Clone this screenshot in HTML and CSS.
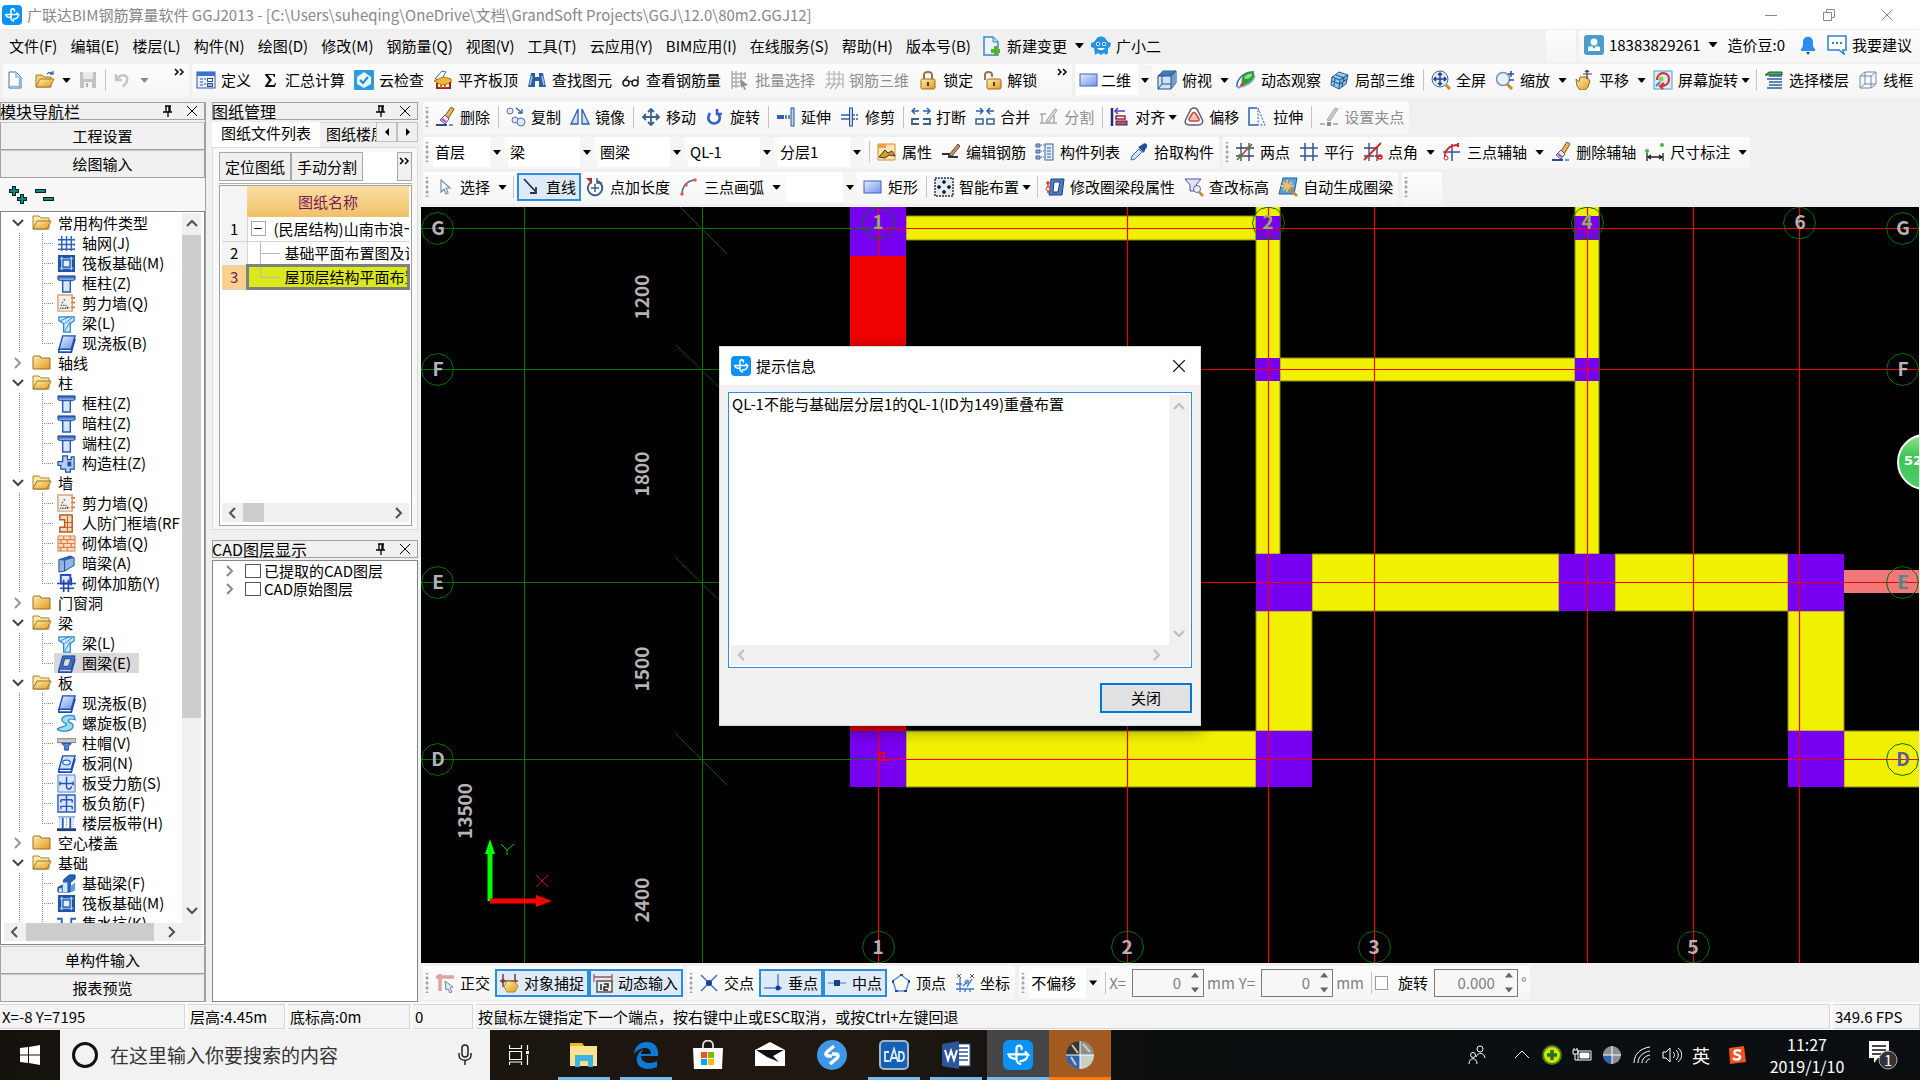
FILE: index.html
```html
<!DOCTYPE html>
<html lang="zh-CN">
<head>
<meta charset="utf-8">
<title>广联达BIM钢筋算量软件 GGJ2013</title>
<link rel="stylesheet" href="styles.css">
</head>
<body>
<svg class="sprite" width="0" height="0" aria-hidden="true">
<defs>
<linearGradient id="gBlue" x1="0" y1="0" x2="1" y2="1"><stop offset="0" stop-color="#e4edff"/><stop offset="1" stop-color="#6f93e8"/></linearGradient>
<linearGradient id="gGold" x1="0" y1="0" x2="1" y2="1"><stop offset="0" stop-color="#fff0b0"/><stop offset="1" stop-color="#e0981c"/></linearGradient>
<linearGradient id="gSteel" x1="0" y1="0" x2="0" y2="1"><stop offset="0" stop-color="#1d4fae"/><stop offset="1" stop-color="#a9c8f4"/></linearGradient>
</defs>
<symbol id="logo" viewBox="0 0 20 20"><rect width="20" height="20" rx="4" fill="#0a93f5"/><path d="M12.500 6c0-3-3.500-3-3.500 0v7M3.500 9.500h13l-1.500-1.500M16.500 9.500c0 3-2.500 4.500-5 4.500M4 9.500c0 2 1.500 3 5 3M9 13c0 1.500 1 2.500 2.500 3" fill="none" stroke="#fff" stroke-width="1.500" stroke-linecap="round"/></symbol>
<symbol id="new" viewBox="0 0 20 20"><path d="M2 2h7l5 5v11H2z" fill="#fff" stroke="#3f6ea8"/><path d="M9 2v5h5M12.500 8v8.500H3" fill="none" stroke="#8fb3dd" stroke-width="1.500"/></symbol>
<symbol id="open" viewBox="0 0 20 20"><path d="M1 17V5h6l2 2h7v10z" fill="#f5d27a" stroke="#a5782b"/><path d="M1 17l4-8h14l-4 8z" fill="url(#gGold)" stroke="#a5782b"/><path d="M12 4c2-2 4-2 6 0M18 1v3h-3" fill="none" stroke="#3c6aa0" stroke-width="1.300"/></symbol>
<symbol id="save" viewBox="0 0 20 20"><path d="M2 2h16v16H2z" fill="#c2c2c2"/><path d="M5 2h10v7H5z" fill="#e9e9e9"/><path d="M6 12h8v6H6z" fill="#f4f4f4"/><path d="M8 13h2v4H8z" fill="#b0b0b0"/></symbol>
<symbol id="undo" viewBox="0 0 20 20"><path d="M3 4v6h6M4 9c4-6 12-4 10 2-1 3-3 4-4 6" fill="none" stroke="#c6c6c6" stroke-width="2.500"/></symbol>
<symbol id="define" viewBox="0 0 20 20"><rect x="1" y="2" width="18" height="16" fill="#e9f1ff" stroke="#2f5aa8"/><path d="M1 2h18v4H1z" fill="#3d71cf"/><path d="M4 9h3M4 12h3M4 15h3M8 9h2M8 14h2" stroke="#33508c"/><rect x="11.500" y="8.500" width="5" height="3" fill="#fff" stroke="#33508c"/><rect x="11.500" y="13.500" width="5" height="3" fill="#9bb9ee" stroke="#33508c"/></symbol>
<symbol id="sigma" viewBox="0 0 20 20"><path d="M5 4h10v3h-1l-1-2H8l4 5-4 5h6l1-2h1l-1 4H5v-1l4-6-4-5z" fill="#111"/></symbol>
<symbol id="check" viewBox="0 0 20 20"><rect width="20" height="20" rx="1" fill="#2d9be0"/><path d="M10 2l7 5v7l-7 4-7-4V7z" fill="#e8f6ff"/><path d="M6 10l3 3 5-6" fill="none" stroke="#2089d0" stroke-width="2"/></symbol>
<symbol id="slabtop" viewBox="0 0 20 20"><path d="M2 9l7-8 4 1-5 8z" fill="#fff" stroke="#3a68b0"/><path d="M1 11l9-4 8 2v4l-9 2z" fill="#f0b73a" stroke="#b07414"/><path d="M4 13v5h13v-6" fill="none" stroke="#a3231d" stroke-width="2"/><path d="M8 15v3M12 14v4" stroke="#c06a20" stroke-width="2"/></symbol>
<symbol id="binoc" viewBox="0 0 20 20"><path d="M4 3h4v4h4V3h4l3 14h-7v-6H8v6H1z" fill="#2c5ea8"/><path d="M5 6l-2 9M15 6l2 9" stroke="#a9c6ec" stroke-width="1.500"/></symbol>
<symbol id="glasses" viewBox="0 0 20 20"><circle cx="5" cy="13" r="3" fill="none" stroke="#222" stroke-width="1.500"/><circle cx="14" cy="13" r="3" fill="none" stroke="#222" stroke-width="1.500"/><path d="M8 12c1-1 2-1 3 0M2 12l5-6M17 12V6" fill="none" stroke="#222" stroke-width="1.300"/></symbol>
<symbol id="batch" viewBox="0 0 20 20"><path d="M2 1v18M2 4h14M2 8h14M2 12h8M2 16h8M6 1v17M11 2v9M15 2v7" fill="none" stroke="#b0b0b0" stroke-width="1.500"/><path d="M10 9l8 6-4 1 2 3-2 1-1-4-2 2z" fill="#8d8d8d"/></symbol>
<symbol id="rebar3d" viewBox="0 0 20 20"><path d="M5 1v14M10 1v14M15 1v14M19 4v14M2 4h17M2 9h17M2 14h17M1 18L6 13M6 19l5-6M11 19l5-6" fill="none" stroke="#b2b2b2" stroke-width="1.200"/></symbol>
<symbol id="lock" viewBox="0 0 20 20"><path d="M6 10V5c0-4 8-4 8 0v5" fill="none" stroke="#8a7a58" stroke-width="2"/><rect x="3" y="9" width="14" height="10" rx="1.500" fill="url(#gGold)" stroke="#9c6c16"/><path d="M10 12v4" stroke="#5c3d08" stroke-width="2"/></symbol>
<symbol id="unlock" viewBox="0 0 20 20"><path d="M3 10V5c0-4 7-4 7 0v2" fill="none" stroke="#8a7a58" stroke-width="2"/><rect x="5" y="9" width="14" height="10" rx="1.500" fill="url(#gGold)" stroke="#9c6c16"/><path d="M12 12v4" stroke="#5c3d08" stroke-width="2"/></symbol>
<symbol id="rect" viewBox="0 0 20 20"><rect x="1" y="4" width="17" height="12" fill="url(#gBlue)" stroke="#3c66c8"/></symbol>
<symbol id="cube" viewBox="0 0 20 20"><path d="M1 6l5-5h13v12l-5 6H1z" fill="#cfe2f5" stroke="#234f86"/><path d="M1 6l5-5h13l-5 5z" fill="#3f79b8"/><path d="M14 6v13l5-6V1z" fill="#6fa0cf"/><path d="M1 6h13v13M14 6l5-5M5 6v8h9M1 19l4-5" fill="none" stroke="#234f86"/></symbol>
<symbol id="orbit" viewBox="0 0 20 20"><path d="M1 17C0 10 8 1 18 2" fill="none" stroke="#2c62b4" stroke-width="1.500"/><path d="M6 13C4 5 12 0 18 3c2 6-3 12-9 12z" fill="#2f9e35"/><path d="M8 8c1-3 5-5 8-4 0 3-3 5-6 5z" fill="#8be07c"/><path d="M2 19l4-7 3 3z" fill="#d33a2a"/><path d="M1 17c6 1 15-4 18-11" fill="none" stroke="#7fa6d8" stroke-width="1.500"/></symbol>
<symbol id="local3d" viewBox="0 0 20 20"><path d="M2 7l7-5 9 3-2 9-7 5-8-4z" fill="#9fc9ea" stroke="#1f5f99"/><path d="M2 7l8 3 8-5M10 10l-1 9M6 5l8 3-2 9M5 8l-1 8M2 11l8 3 7-5" fill="none" stroke="#1f5f99" stroke-width="1.200"/></symbol>
<symbol id="fit" viewBox="0 0 20 20"><circle cx="9" cy="9" r="8" fill="#e1ecfb" stroke="#45679f"/><path d="M9 3v12M3 9h12M7 5l2-2 2 2M7 13l2 2 2-2M5 7L3 9l2 2M13 7l2 2-2 2" fill="none" stroke="#1d3f8a" stroke-width="1.500"/><path d="M15 15l4 4" stroke="#c98a2a" stroke-width="3"/></symbol>
<symbol id="zoom" viewBox="0 0 20 20"><circle cx="8" cy="9" r="6.500" fill="#e8f1fb" stroke="#7f93ac" stroke-width="1.500"/><path d="M12 14l5 5" stroke="#c08a32" stroke-width="3"/><path d="M16 1v6M13 4h6M14 10h5" stroke="#2a4f9a" stroke-width="1.500"/></symbol>
<symbol id="pan" viewBox="0 0 20 20"><path d="M2 9l3 3 1-5h7l3 4-2 6-3 3H6l-3-4z" fill="url(#gGold)" stroke="#8e6a1f"/><path d="M13 0v9M9 4h9M11 2l2-2 2 2" fill="none" stroke="#444" stroke-width="1.200"/></symbol>
<symbol id="rotscr" viewBox="0 0 20 20"><rect x="1" y="1" width="18" height="18" fill="#d8eefb" stroke="#4aa0d8"/><path d="M4 10C4 1 16 1 16 9c0 5-4 7-8 7M11 13l-4 3 3 3" fill="none" stroke="#d33" stroke-width="2.200"/><circle cx="8" cy="9" r="2.500" fill="#8bcf5c"/><path d="M3 16l4-4" stroke="#3f7fc0" stroke-width="2"/></symbol>
<symbol id="floors" viewBox="0 0 20 20"><path d="M1 5l4-3h13v3z" fill="#4fae4d" stroke="#1d5a2a"/><path d="M5 6h13M3 9h15M5 12h13M5 15h13M3 18h15" stroke="#2c5f9e" stroke-width="1.600"/></symbol>
<symbol id="wire" viewBox="0 0 20 20"><path d="M2 6l5-4h11v12l-5 4H2zM2 6h11v12M13 6l5-4M7 2v12h11M2 18l5-4" fill="none" stroke="#7089b0"/></symbol>
<symbol id="erase" viewBox="0 0 20 20"><path d="M10 9l6-9 3 2-6 10z" fill="#f0b552" stroke="#805820"/><path d="M5 13l5-5 4 4-4 5z" fill="#e6e9f8" stroke="#5a4a8a"/><path d="M7 12l4 3" stroke="#c04890" stroke-width="2"/><path d="M1 17h11v2H1z" fill="#2a4e8c"/><path d="M14 17h4v2h-4z" fill="#7894c4"/></symbol>
<symbol id="copy" viewBox="0 0 20 20"><circle cx="4" cy="4" r="3" fill="#dfe9f7" stroke="#52719e"/><circle cx="9" cy="13" r="3" fill="#dfe9f7" stroke="#52719e"/><circle cx="15" cy="15" r="4" fill="#dfe9f7" stroke="#52719e"/><path d="M10 1l6 5M16 2v4h-4" fill="none" stroke="#2f5fae" stroke-width="1.300"/></symbol>
<symbol id="mirror" viewBox="0 0 20 20"><path d="M8 2v15H1zM12 2v15h7z" fill="#cfe0f8" stroke="#2f5fae" stroke-width="1.300"/></symbol>
<symbol id="move" viewBox="0 0 20 20"><path d="M10 2v16M2 10h16M7 5l3-3 3 3M7 15l3 3 3-3M5 7l-3 3 3 3M15 7l3 3-3 3" fill="none" stroke="#3c618c" stroke-width="1.800"/></symbol>
<symbol id="rotate" viewBox="0 0 20 20"><path d="M5 6c-5 8 3 13 8 9 3-3 2-7-1-9M12 2v5h5" fill="none" stroke="#2f62c8" stroke-width="2.600"/></symbol>
<symbol id="extend" viewBox="0 0 20 20"><path d="M1 8h7v4H1z" fill="#2f62b0"/><path d="M10 8v4M13 8v4" stroke="#2f62b0" stroke-width="1.500"/><rect x="15" y="1" width="3" height="18" fill="#bcd4f4" stroke="#2f5590"/></symbol>
<symbol id="trim" viewBox="0 0 20 20"><path d="M1 8h8M1 12h8M13 8h2M16 8h2M13 12h2M16 12h2" stroke="#2f62b0" stroke-width="1.500"/><rect x="9.500" y="1" width="3" height="18" fill="#bcd4f4" stroke="#2f5590"/></symbol>
<symbol id="break" viewBox="0 0 20 20"><path d="M1 4h7M4 1L1 4l3 3M12 4h7M16 1l3 3-3 3" fill="none" stroke="#2f62b0" stroke-width="1.500"/><path d="M8 12H1v5h7M12 12h7v5h-7" fill="none" stroke="#3c618c" stroke-width="1.800"/></symbol>
<symbol id="merge" viewBox="0 0 20 20"><path d="M1 4h7M5 1l3 3-3 3M12 4h7M15 1l-3 3 3 3" fill="none" stroke="#2f62b0" stroke-width="1.500"/><path d="M1 12h7v5H1zM12 12h7v5h-7z" fill="none" stroke="#3c618c" stroke-width="1.500"/></symbol>
<symbol id="split" viewBox="0 0 20 20"><path d="M1 7h6M1 16h17M3 7v9M15 8v8" fill="none" stroke="#a8a8a8" stroke-width="1.500"/><path d="M7 14L16 2l2 1-8 12z" fill="#ddd" stroke="#a0a0a0"/></symbol>
<symbol id="align" viewBox="0 0 20 20"><path d="M2 1v18" stroke="#1c2f7a" stroke-width="2.500"/><path d="M5 4h10M8 1L5 4l3 3" fill="none" stroke="#4a48c8" stroke-width="1.500"/><rect x="6" y="9" width="9" height="3" fill="#fff" stroke="#a3202c" stroke-width="1.500"/><rect x="6" y="14" width="11" height="4" fill="#d94550" stroke="#1c2f7a"/></symbol>
<symbol id="offset" viewBox="0 0 20 20"><path d="M6 4c1-4 7-4 8 0l4 8c2 4-1 6-4 6H6c-4 0-6-2-4-6z" fill="#fff" stroke="#52617e" stroke-width="1.500"/><path d="M8 7c1-2 3-2 4 0l3 5c0 2 0 2-2 2H7c-2 0-2-1-2-2z" fill="#f7c0b8" stroke="#d04438" stroke-width="1.500"/></symbol>
<symbol id="stretch" viewBox="0 0 20 20"><path d="M9 1H1v17h9" fill="none" stroke="#2f62b0" stroke-width="1.500"/><path d="M10 1l7 17H10z" fill="#eef4fd" stroke="#2f62b0" stroke-dasharray="2 1.500"/></symbol>
<symbol id="grip-pt" viewBox="0 0 20 20"><path d="M8 13l8-12 3 1-8 12z" fill="#ccc" stroke="#a6a6a6"/><path d="M1 17h5M14 17h5" stroke="#a0a0a0" stroke-width="1.500"/><path d="M8 15h4v4H8z" fill="#8c8c8c"/></symbol>
<symbol id="props" viewBox="0 0 20 20"><path d="M1 2h17v16H1z" fill="#fbe5b6" stroke="#d88c30"/><path d="M1 2h8v4H1z" fill="#e9a344"/><path d="M2 15l6-7 3 3 4-2 3 5-6-1-4 3z" fill="#d8a018" stroke="#333"/></symbol>
<symbol id="editbar" viewBox="0 0 20 20"><path d="M1 12h7v3h9" fill="none" stroke="#333" stroke-width="1.800"/><path d="M8 13L17 2l2 2-8 10z" fill="#c49a74" stroke="#6b3c28"/></symbol>
<symbol id="list" viewBox="0 0 20 20"><path d="M1 2h4v3H1zM1 8h4v3H1zM1 14h4v3H1z" fill="#8fb0de" stroke="#44618c"/><path d="M6 3h3M6 9h3M6 15h3" stroke="#44618c" stroke-dasharray="1 1"/><rect x="10" y="2" width="8" height="16" fill="#dfe9f8" stroke="#3b62a0"/><path d="M12 6h4M12 9h4M12 12h4M12 15h4" stroke="#3b62a0"/></symbol>
<symbol id="picker" viewBox="0 0 20 20"><path d="M2 18l1-4 7-7 3 3-7 7z" fill="#cfe2f8" stroke="#3b6db0"/><path d="M9 5l6 6 1-3 2-3c1-3-2-5-4-3l-3 2z" fill="#254f96"/></symbol>
<symbol id="twopt" viewBox="0 0 20 20"><path d="M6 1v18M14 1v18M1 6h18M1 14h18" stroke="#33466e" stroke-width="1.300"/><path d="M2 18L17 2" stroke="#d22" stroke-width="1.500"/><circle cx="14" cy="6" r="2" fill="#2b9a33"/><circle cx="5" cy="14" r="2" fill="#2b9a33"/></symbol>
<symbol id="parallel" viewBox="0 0 20 20"><path d="M6 1v18M14 1v18M1 6h18M1 14h18" stroke="#34539c" stroke-width="1.500"/></symbol>
<symbol id="ptangle" viewBox="0 0 20 20"><path d="M6 1v18M14 5v14M1 6h14M1 14h10" stroke="#33466e" stroke-width="1.300"/><path d="M1 18L18 1M12 14h6" stroke="#d22" stroke-width="1.800"/><circle cx="17" cy="15" r="2" fill="none" stroke="#d22" stroke-width="1.500"/></symbol>
<symbol id="threeaxis" viewBox="0 0 20 20"><path d="M1 10h17M10 2v17" stroke="#34539c" stroke-width="1.500"/><path d="M3 16C2 8 8 3 16 3" fill="none" stroke="#d22" stroke-width="1.800"/><circle cx="4" cy="16" r="2" fill="#fff" stroke="#d22"/><path d="M16 1v4" stroke="#d22" stroke-width="2"/></symbol>
<symbol id="dim" viewBox="0 0 20 20"><path d="M2 11v8M18 11v8M3 15h14M6 13l-3 2 3 2M14 13l3 2-3 2" fill="none" stroke="#222" stroke-width="1.300"/><circle cx="2" cy="9" r="2" fill="#49b04a"/><circle cx="17" cy="3" r="2" fill="#49b04a"/></symbol>
<symbol id="cursor" viewBox="0 0 20 20"><path d="M6 3v12l3-3 2 5 2-1-2-5h4z" fill="#fff" stroke="#7a8db0" stroke-width="1.200"/></symbol>
<symbol id="line" viewBox="0 0 20 20"><path d="M3 2l12 13M15 10v6h-6" fill="none" stroke="#22345f" stroke-width="1.800"/></symbol>
<symbol id="ptlen" viewBox="0 0 20 20"><path d="M6 5c-8 7 1 17 8 12 5-4 4-11-2-13" fill="none" stroke="#3e5c86" stroke-width="2"/><path d="M10 7v8M6 11h8M12 1v5h5" fill="none" stroke="#3e5c86" stroke-width="1.500"/><path d="M1 1h6v6z" fill="#b3312c"/></symbol>
<symbol id="arc" viewBox="0 0 20 20"><path d="M3 18C3 9 8 4 16 3" fill="none" stroke="#3e6db4" stroke-width="1.500"/><circle cx="3" cy="17" r="1.800" fill="#e06050"/><circle cx="7" cy="8" r="1.800" fill="#e06050"/><circle cx="16" cy="3" r="1.800" fill="#e06050"/></symbol>
<symbol id="smart" viewBox="0 0 20 20"><rect x="1" y="1" width="18" height="18" fill="#dfeaf8" stroke="#333" stroke-width="1.500" stroke-dasharray="2 1"/><path d="M10 3v4M10 13v4M3 10h4M13 10h4M8 5h4M8 15h4M5 8v4M15 8v4" stroke="#111" stroke-width="1.500"/></symbol>
<symbol id="segprop" viewBox="0 0 20 20"><path d="M6 2h13l-2 16H4z" fill="#4d7fc6" stroke="#1f3f7c"/><path d="M9 5h6l-2 10H8z" fill="#fff" stroke="#1f3f7c"/><path d="M1 6h5M3 4v12" stroke="#d2452c" stroke-width="1.500"/><circle cx="3" cy="12" r="2" fill="#fff" stroke="#d2452c"/></symbol>
<symbol id="elev" viewBox="0 0 20 20"><path d="M1 2h16l-5 6v6H6V8z" fill="#dce3fa" stroke="#4a57a8"/><circle cx="13" cy="12" r="3.500" fill="#e7f2fb" stroke="#667"/><path d="M15 15l4 4" stroke="#c08a32" stroke-width="2.500"/></symbol>
<symbol id="autogen" viewBox="0 0 20 20"><path d="M5 1h14l-3 16H1z" fill="#5ba0df" stroke="#1f5f99"/><path d="M9 3v12M3 9h13M5 5l9 9M14 5l-9 8" stroke="#f2c05c" stroke-width="1.800"/><path d="M12 12l7 7" stroke="#c08a32" stroke-width="2.500"/></symbol>
<symbol id="ortho" viewBox="0 0 20 20"><path d="M1 4h18M5 1v17" stroke="#dfa3a3" stroke-width="3.500"/><path d="M10 8l8 6-3 1 2 4-2 1-2-4-2 1z" fill="#dfe6ee" stroke="#7386a0"/></symbol>
<symbol id="snap" viewBox="0 0 20 20"><path d="M1 8h18M4 1v13M16 1v13" stroke="#7c3b3b" stroke-width="1.500"/><circle cx="4" cy="8" r="2" fill="#7c3b3b"/><path d="M5 14l3-6 8 1 3 4-3 6H8z" fill="url(#gGold)" stroke="#b08a30"/></symbol>
<symbol id="dyn" viewBox="0 0 20 20"><path d="M1 4h18M1 1v8M19 1v8" stroke="#9c5a5a" stroke-width="1.300"/><rect x="4" y="8" width="15" height="11" fill="#eee" stroke="#555" stroke-width="1.500"/><path d="M8 11v6M11 11h4v3h-4v3h4" fill="none" stroke="#222" stroke-width="1.500"/></symbol>
<symbol id="cross" viewBox="0 0 20 20"><path d="M2 2l16 16M18 2L2 18" stroke="#3a76c8" stroke-width="1.500"/><circle cx="10" cy="10" r="3" fill="#173f8f"/></symbol>
<symbol id="perp" viewBox="0 0 20 20"><path d="M1 15h18M15 1v14" stroke="#4a86d8" stroke-width="1.500"/><circle cx="15" cy="15" r="2.500" fill="#173f8f"/></symbol>
<symbol id="mid" viewBox="0 0 20 20"><path d="M1 10h18" stroke="#6ba0e4" stroke-width="1.500"/><path d="M7 7h6v6H7z" fill="#173f8f"/></symbol>
<symbol id="vertex" viewBox="0 0 20 20"><path d="M10 2l8 6-3 10H5L2 8z" fill="none" stroke="#5d8fd8" stroke-width="1.500"/><path d="M9 1h3v2H9zM1 7h2v3H1zM17 7h2v3h-2zM4 17h3v2H4zM13 17h3v2h-3z" fill="#214e9a"/></symbol>
<symbol id="coord" viewBox="0 0 20 20"><path d="M1 16h18M5 5v14M1 11h6M8 13l5-5M12 14l5-8M10 16v3M15 16v3" fill="none" stroke="#3a76c8" stroke-width="1.300"/><path d="M2 1l4 4M6 1L2 5M15 1l4 4M19 1l-4 4" stroke="#555"/><circle cx="12" cy="9" r="2" fill="none" stroke="#3a76c8"/></symbol>
<symbol id="newchange" viewBox="0 0 20 20"><path d="M2 1h9l5 5v13H2z" fill="#eaf5ff" stroke="#3a87c6" stroke-width="1.500"/><path d="M11 1v5h5" fill="#bcdcf4" stroke="#3a87c6"/><path d="M12 10h3v3h3v4h-3v3h-3v-3H9v-4h3z" fill="#52b52c"/></symbol>
<symbol id="robot" viewBox="0 0 20 20"><path d="M0 7l3-1 3-4c2-2 6-2 8 0l3 4 3 1-1 4-2 1v5l-2 2-2-2-3 2-3-2-3 2-1-7-3-1z" fill="#2296e4"/><circle cx="7" cy="8" r="2" fill="#fff"/><circle cx="13" cy="8" r="2" fill="#fff"/><circle cx="7" cy="8" r="1" fill="#125"/><circle cx="13" cy="8" r="1" fill="#125"/><path d="M6 12c2 3 6 3 8 0z" fill="#fff"/></symbol>
<symbol id="user" viewBox="0 0 20 20"><rect width="20" height="20" rx="3" fill="#4b9cc9"/><circle cx="10" cy="7" r="3.500" fill="#fff"/><path d="M4 16v-4l4-1 2 3 2-3 4 1v4z" fill="#fff"/></symbol>
<symbol id="bell" viewBox="0 0 20 20"><path d="M3 14c2-2 2-3 2-7 0-7 10-7 10 0 0 4 0 5 2 7v2H3z" fill="#2b8df0"/><path d="M8 17h4l-2 3z" fill="#1c4f88"/></symbol>
<symbol id="bubble" viewBox="0 0 20 20"><path d="M1 1h18v14h-3l1 4-5-4H1z" fill="#fff" stroke="#2b7fd8" stroke-width="1.500"/><path d="M5 8h2M9 8h2M13 8h2" stroke="#2b7fd8" stroke-width="2"/></symbol>
<symbol id="pin" viewBox="0 0 12 12"><path d="M3 1h6M4 1v6M8 1v6M7 1v6M1 7h9M6 7v5" fill="none" stroke="#000" stroke-width="1.300"/></symbol>
<symbol id="x" viewBox="0 0 12 12"><path d="M1 1l10 10M11 1L1 11" stroke="currentColor" fill="none"/></symbol>
<symbol id="down" viewBox="0 0 12 12"><path d="M1 3l5 5 5-5" fill="none" stroke="currentColor" stroke-width="2"/></symbol>
<symbol id="up" viewBox="0 0 12 12"><path d="M1 9l5-5 5 5" fill="none" stroke="currentColor" stroke-width="2"/></symbol>
<symbol id="right" viewBox="0 0 12 12"><path d="M3 1l5 5-5 5" fill="none" stroke="currentColor" stroke-width="2"/></symbol>
<symbol id="left" viewBox="0 0 12 12"><path d="M9 1L4 6l5 5" fill="none" stroke="currentColor" stroke-width="2"/></symbol>
<symbol id="more" viewBox="0 0 12 12"><path d="M2 2l3 3-3 3M7 2l3 3-3 3" fill="none" stroke="#000" stroke-width="1.500"/></symbol>
<symbol id="fopen" viewBox="0 0 20 20"><path d="M1 16V3h6l2 2h8v11z" fill="#fbe7a0" stroke="#a5843b"/><path d="M1 16l4-8h14l-4 8z" fill="url(#gGold)" stroke="#9a7020"/></symbol>
<symbol id="fclosed" viewBox="0 0 20 20"><path d="M1 16V4l1-1h6l1 2h9v11z" fill="url(#gGold)" stroke="#9a7020"/></symbol>
<symbol id="t-grid" viewBox="0 0 20 20"><path d="M5 2v16M10 2v16M15 2v16M1 6h16M1 11h16M1 16h16" stroke="#2a62c4" stroke-width="1.500"/><path d="M17 5h2v2h-2zM17 10h2v2h-2zM17 15h2v2h-2z" fill="#2a62c4"/></symbol>
<symbol id="t-raft" viewBox="0 0 20 20"><path d="M1 1h18v18H1z" fill="#1f55a4"/><path d="M3 5h14M3 15h14M5 3v14M15 3v14" stroke="#b9d4f6" stroke-width="1.300"/><path d="M7 7h6v6H7z" fill="#e6f0fc"/></symbol>
<symbol id="t-col" viewBox="0 0 20 20"><path d="M1 2h18v4l-3 1H4L1 6z" fill="url(#gSteel)" stroke="#17469e"/><path d="M6 7h8v12H6z" fill="#d5e5fb" stroke="#2a5cb4" stroke-width="1.500"/></symbol>
<symbol id="t-shear" viewBox="0 0 20 20"><path d="M1 1h15v17H1z" fill="#f4f2f0" stroke="#d9a37f" stroke-width="1.500"/><path d="M3 15h10M4 12h6M5 9h2M10 14h3M7 6h2" stroke="#555" stroke-width="1.500" stroke-dasharray="1.500 1"/><path d="M15 4h4M15 9h4M15 14h4" stroke="#e2781f" stroke-width="1.800"/></symbol>
<symbol id="t-beam" viewBox="0 0 20 20"><path d="M2 3h16v4l-4 3v9H7V10L2 7z" fill="#cbe8fb" stroke="#2585cf" stroke-width="1.300"/><path d="M4 7l9-4M8 10l8-6M8 18l6-10" stroke="#2585cf"/></symbol>
<symbol id="t-slab" viewBox="0 0 20 20"><path d="M6 2h13l-4 14H2z" fill="url(#gBlue)" stroke="#1c4fae" stroke-width="1.500"/><path d="M2 16v3h13l4-14" fill="none" stroke="#1c4fae" stroke-width="1.800"/></symbol>
<symbol id="t-struct" viewBox="0 0 20 20"><path d="M6 2h5v4h4V3h3v13h-4v3H9v-3H4v-4H1V8h5z" fill="#b3cff5" stroke="#2150a4" stroke-width="1.300"/><path d="M11 8h4v5h-4z" fill="#1f4ca0"/></symbol>
<symbol id="t-civil" viewBox="0 0 20 20"><path d="M3 1h13v18H3v-5h5V6H3z" fill="#f7d8b8" stroke="#b35a20" stroke-width="1.500"/><path d="M11 2v16M8 9h8M8 14h8" stroke="#b35a20"/></symbol>
<symbol id="t-brick" viewBox="0 0 20 20"><path d="M1 2h18v16H1z" fill="#f8dcc4" stroke="#d98347"/><path d="M1 6h18M1 10h18M1 14h18M7 2v4M14 2v4M4 6v4M11 6v4M7 10v4M15 10v4M4 14v4M11 14v4" stroke="#d98347" stroke-width="1.300"/></symbol>
<symbol id="t-hidden" viewBox="0 0 20 20"><path d="M2 6l12-4 4 2v8L8 18l-6 1z" fill="#8eb6e8" stroke="#20497f"/><path d="M2 6l6 1 10-3-4-2z" fill="#2f5f9e"/><path d="M8 7v11" stroke="#20497f"/></symbol>
<symbol id="t-rebar" viewBox="0 0 20 20"><path d="M4 1h10v9H4z" fill="#dce8ff" stroke="#1f4fd0" stroke-width="2"/><path d="M0 10h20M3 15h15M7 6v13M12 6v13M15 4v8" stroke="#2547a8" stroke-width="1.800"/></symbol>
<symbol id="t-ring" viewBox="0 0 20 20"><path d="M6 2h13l-4 14H2z" fill="#3f72c8" stroke="#1c3f8e"/><path d="M8 5h7l-3 8H6z" fill="#dcdcdc" stroke="#1c3f8e"/><path d="M2 16v3h13l4-14" fill="none" stroke="#1c4fae" stroke-width="1.800"/></symbol>
<symbol id="t-spiral" viewBox="0 0 20 20"><path d="M18 2C8 0 3 4 6 8c2 2 6 2 3 4-2 2-6 1-9 4 6 4 17 2 17-4 0-3-6-3-5-5 1-2 4-2 7-1z" fill="#9fdcf8" stroke="#2888c8" stroke-width="1.300"/></symbol>
<symbol id="t-cap" viewBox="0 0 20 20"><path d="M0 5h20v4H0z" fill="#ccc" stroke="#777"/><path d="M5 10h10l-3 3v4H8v-4z" fill="#4c86e0" stroke="#1c4fae"/></symbol>
<symbol id="t-hole" viewBox="0 0 20 20"><path d="M6 2h13l-4 14H2z" fill="#cfe0fa" stroke="#1c4fae" stroke-width="1.500"/><ellipse cx="10" cy="9" rx="4" ry="2.500" fill="#fff" stroke="#1c6fde" stroke-width="1.300"/><path d="M2 16v3h13l4-14" fill="none" stroke="#1c4fae" stroke-width="1.800"/></symbol>
<symbol id="t-main" viewBox="0 0 20 20"><path d="M1 1h18v18H1z" fill="#d9e6fb" stroke="#4a7bd0"/><path d="M3 10h14M3 8v4M17 8v4M10 3v10c0 4 5 4 5 0" fill="none" stroke="#2457b8" stroke-width="1.500"/></symbol>
<symbol id="t-neg" viewBox="0 0 20 20"><path d="M1 1h18v18H1z" fill="#d9e6fb" stroke="#2a5cc4" stroke-width="1.500"/><path d="M10 1v18M4 6h12M4 13h12M4 6v3M16 6v3M4 13v3M16 13v3" stroke="#2457b8" stroke-width="1.500"/></symbol>
<symbol id="t-band" viewBox="0 0 20 20"><path d="M1 3h18" stroke="#7ea4de" stroke-width="1.500"/><path d="M6 4v11M14 4v11" stroke="#2457b8" stroke-width="2"/><path d="M3 4v10M10 4v10M17 4v10" stroke="#7ea4de" stroke-dasharray="2 1"/><path d="M0 15h20v3H0z" fill="#1c3f7e"/></symbol>
<symbol id="t-fbeam" viewBox="0 0 20 20"><path d="M7 6l6-5h6v4l-5 4v10H1v-5l6-3z" fill="#1f66b4" stroke="#123f78"/><path d="M6 9h5v10H6zM2 15h3v4H2z" fill="#cfe4fa"/><path d="M14 13l5-4v8l-3 2h-2z" fill="#5f9bd8"/></symbol>
<symbol id="t-pit" viewBox="0 0 20 20"><path d="M0 5h5v10h10V5h5" fill="none" stroke="#2a62c4" stroke-width="2"/></symbol>
</svg>

<header class="titlebar">
  <svg class="ico"><use href="#logo"/></svg>
  <h1>广联达BIM钢筋算量软件 GGJ2013 - [C:\Users\suheqing\OneDrive\文档\GrandSoft Projects\GGJ\12.0\80m2.GGJ12]</h1>
  <div class="window-buttons">
    <button aria-label="最小化"><svg viewBox="0 0 12 12"><path d="M0 6.500h12" stroke="#888"/></svg></button>
    <button aria-label="还原"><svg viewBox="0 0 12 12"><path d="M.5 3.500h8v8h-8zM3.500 3V.500h8v8H9" fill="none" stroke="#888"/></svg></button>
    <button aria-label="关闭窗口"><svg viewBox="0 0 12 12"><path d="M.5.500l11 11M11.500.500l-11 11" stroke="#888"/></svg></button>
  </div>
</header>

<nav class="menubar">
  <button class="menu">文件(F)</button><button class="menu">编辑(E)</button><button class="menu">楼层(L)</button><button class="menu">构件(N)</button><button class="menu">绘图(D)</button><button class="menu">修改(M)</button><button class="menu">钢筋量(Q)</button><button class="menu">视图(V)</button><button class="menu">工具(T)</button><button class="menu">云应用(Y)</button><button class="menu">BIM应用(I)</button><button class="menu">在线服务(S)</button><button class="menu">帮助(H)</button><button class="menu">版本号(B)</button>
  <button class="tool drop"><svg class="ico"><use href="#newchange"/></svg>新建变更</button>
  <button class="tool"><svg class="ico"><use href="#robot"/></svg>广小二</button>
  <div class="bar spare"></div>
  <div class="bar account">
    <button class="tool drop"><svg class="ico"><use href="#user"/></svg>18383829261</button>
    <span class="beans">造价豆:0</span>
    <button class="tool" aria-label="通知"><svg class="ico"><use href="#bell"/></svg></button>
    <button class="tool"><svg class="ico"><use href="#bubble"/></svg>我要建议</button>
  </div>
</nav>

<div class="toolrow main-tools">
  <div class="bar files">
    <button class="tool icon-only" aria-label="新建"><svg class="ico"><use href="#new"/></svg></button>
    <button class="tool icon-only drop" aria-label="打开"><svg class="ico"><use href="#open"/></svg></button>
    <button class="tool icon-only" aria-label="保存"><svg class="ico"><use href="#save"/></svg></button>
    <i class="sep"></i>
    <button class="tool icon-only drop off" aria-label="撤销"><svg class="ico"><use href="#undo"/></svg></button>
    <button class="more" aria-label="更多"><svg><use href="#more"/></svg></button>
  </div>
  <div class="bar calc">
    <button class="tool"><svg class="ico"><use href="#define"/></svg>定义</button>
    <button class="tool"><svg class="ico"><use href="#sigma"/></svg>汇总计算</button>
    <button class="tool"><svg class="ico"><use href="#check"/></svg>云检查</button>
    <button class="tool"><svg class="ico"><use href="#slabtop"/></svg>平齐板顶</button>
    <button class="tool"><svg class="ico"><use href="#binoc"/></svg>查找图元</button>
    <button class="tool"><svg class="ico"><use href="#glasses"/></svg>查看钢筋量</button>
    <button class="tool off"><svg class="ico"><use href="#batch"/></svg>批量选择</button>
    <button class="tool off"><svg class="ico"><use href="#rebar3d"/></svg>钢筋三维</button>
    <button class="tool"><svg class="ico"><use href="#lock"/></svg>锁定</button>
    <button class="tool"><svg class="ico"><use href="#unlock"/></svg>解锁</button>
    <button class="more" aria-label="更多"><svg><use href="#more"/></svg></button>
  </div>
  <div class="bar view">
    <label class="combo with-icon"><svg class="ico"><use href="#rect"/></svg><select aria-label="视图模式"><option>二维</option></select></label>
    <button class="tool drop"><svg class="ico"><use href="#cube"/></svg>俯视</button>
    <button class="tool"><svg class="ico"><use href="#orbit"/></svg>动态观察</button>
    <button class="tool"><svg class="ico"><use href="#local3d"/></svg>局部三维</button>
    <i class="sep"></i>
    <button class="tool"><svg class="ico"><use href="#fit"/></svg>全屏</button>
    <button class="tool drop"><svg class="ico"><use href="#zoom"/></svg>缩放</button>
    <button class="tool drop"><svg class="ico"><use href="#pan"/></svg>平移</button>
    <button class="tool drop tight"><svg class="ico"><use href="#rotscr"/></svg>屏幕旋转</button>
    <i class="sep"></i>
    <button class="tool"><svg class="ico"><use href="#floors"/></svg>选择楼层</button>
    <button class="tool"><svg class="ico"><use href="#wire"/></svg>线框</button>
  </div>
</div>

<main>
  <aside class="nav">
    <header class="panel-head"><h2>模块导航栏</h2><button aria-label="固定"><svg><use href="#pin"/></svg></button><button aria-label="关闭"><svg><use href="#x"/></svg></button></header>
    <button class="section">工程设置</button>
    <button class="section">绘图输入</button>
    <div class="tree-tools">
      <button aria-label="全部展开"><svg viewBox="0 0 20 20"><path d="M6 1v10M1 6h10M14 9v10M9 14h10" stroke="#022" stroke-width="4"/><path d="M6 2v8M2 6h8M14 10v8M10 14h8" stroke="#0a8a80" stroke-width="2"/></svg></button>
      <button aria-label="全部折叠"><svg viewBox="0 0 20 20"><path d="M0 6h11M8 14h11" stroke="#022" stroke-width="4"/><path d="M1 6h9M9 14h9" stroke="#0a8a80" stroke-width="2"/></svg></button>
    </div>
    <div class="tree-box">
      <ul class="tree">
        <li><div class="folder"><svg class="chev"><use href="#down"/></svg><svg class="ico"><use href="#fopen"/></svg>常用构件类型</div>
          <ul><li><svg class="ico"><use href="#t-grid"/></svg>轴网(J)</li><li><svg class="ico"><use href="#t-raft"/></svg>筏板基础(M)</li><li><svg class="ico"><use href="#t-col"/></svg>框柱(Z)</li><li><svg class="ico"><use href="#t-shear"/></svg>剪力墙(Q)</li><li><svg class="ico"><use href="#t-beam"/></svg>梁(L)</li><li><svg class="ico"><use href="#t-slab"/></svg>现浇板(B)</li></ul></li>
        <li><div class="folder closed"><svg class="chev"><use href="#right"/></svg><svg class="ico"><use href="#fclosed"/></svg>轴线</div></li>
        <li><div class="folder"><svg class="chev"><use href="#down"/></svg><svg class="ico"><use href="#fopen"/></svg>柱</div>
          <ul><li><svg class="ico"><use href="#t-col"/></svg>框柱(Z)</li><li><svg class="ico"><use href="#t-col"/></svg>暗柱(Z)</li><li><svg class="ico"><use href="#t-col"/></svg>端柱(Z)</li><li><svg class="ico"><use href="#t-struct"/></svg>构造柱(Z)</li></ul></li>
        <li><div class="folder"><svg class="chev"><use href="#down"/></svg><svg class="ico"><use href="#fopen"/></svg>墙</div>
          <ul><li><svg class="ico"><use href="#t-shear"/></svg>剪力墙(Q)</li><li><svg class="ico"><use href="#t-civil"/></svg>人防门框墙(RF</li><li><svg class="ico"><use href="#t-brick"/></svg>砌体墙(Q)</li><li><svg class="ico"><use href="#t-hidden"/></svg>暗梁(A)</li><li><svg class="ico"><use href="#t-rebar"/></svg>砌体加筋(Y)</li></ul></li>
        <li><div class="folder closed"><svg class="chev"><use href="#right"/></svg><svg class="ico"><use href="#fclosed"/></svg>门窗洞</div></li>
        <li><div class="folder"><svg class="chev"><use href="#down"/></svg><svg class="ico"><use href="#fopen"/></svg>梁</div>
          <ul><li><svg class="ico"><use href="#t-beam"/></svg>梁(L)</li><li class="current"><span><svg class="ico"><use href="#t-ring"/></svg>圈梁(E)</span></li></ul></li>
        <li><div class="folder"><svg class="chev"><use href="#down"/></svg><svg class="ico"><use href="#fopen"/></svg>板</div>
          <ul><li><svg class="ico"><use href="#t-slab"/></svg>现浇板(B)</li><li><svg class="ico"><use href="#t-spiral"/></svg>螺旋板(B)</li><li><svg class="ico"><use href="#t-cap"/></svg>柱帽(V)</li><li><svg class="ico"><use href="#t-hole"/></svg>板洞(N)</li><li><svg class="ico"><use href="#t-main"/></svg>板受力筋(S)</li><li><svg class="ico"><use href="#t-neg"/></svg>板负筋(F)</li><li><svg class="ico"><use href="#t-band"/></svg>楼层板带(H)</li></ul></li>
        <li><div class="folder closed"><svg class="chev"><use href="#right"/></svg><svg class="ico"><use href="#fclosed"/></svg>空心楼盖</div></li>
        <li><div class="folder"><svg class="chev"><use href="#down"/></svg><svg class="ico"><use href="#fopen"/></svg>基础</div>
          <ul><li><svg class="ico"><use href="#t-fbeam"/></svg>基础梁(F)</li><li><svg class="ico"><use href="#t-raft"/></svg>筏板基础(M)</li><li><svg class="ico"><use href="#t-pit"/></svg>集水坑(K)</li></ul></li>
      </ul>
      <div class="vscroll"><svg><use href="#up"/></svg><i class="thumb"></i><svg><use href="#down"/></svg></div>
      <div class="hscroll"><svg><use href="#left"/></svg><i class="thumb"></i><svg><use href="#right"/></svg></div>
    </div>
    <button class="section">单构件输入</button>
    <button class="section">报表预览</button>
  </aside>

  <aside class="drawings">
    <header class="panel-head"><h2>图纸管理</h2><button aria-label="固定"><svg><use href="#pin"/></svg></button><button aria-label="关闭"><svg><use href="#x"/></svg></button></header>
    <div class="tabs">
      <button class="tab selected">图纸文件列表</button><button class="tab">图纸楼层</button>
      <button class="arrow" aria-label="向左"><svg viewBox="0 0 12 12"><path d="M8 2v8L4 6z"/></svg></button><button class="arrow" aria-label="向右"><svg viewBox="0 0 12 12"><path d="M4 2v8l4-4z"/></svg></button>
    </div>
    <div class="sheet">
      <div class="sheet-tools"><button>定位图纸</button><button>手动分割</button><button class="overflow" aria-label="更多"><svg><use href="#more"/></svg></button></div>
      <div class="sheet-grid">
        <table>
          <thead><tr><th class="idx"></th><th>图纸名称</th></tr></thead>
          <tbody>
            <tr><td class="idx">1</td><td><div class="cell"><i class="box">−</i>(民居结构)山南市浪卡子</div></td></tr>
            <tr><td class="idx">2</td><td><div class="cell sub">基础平面布置图及说明</div></td></tr>
            <tr class="picked"><td class="idx">3</td><td><div class="cell sub last">屋顶层结构平面布置图</div></td></tr>
          </tbody>
        </table>
        <div class="hscroll"><svg><use href="#left"/></svg><i class="thumb"></i><svg><use href="#right"/></svg></div>
      </div>
    </div>
    <header class="panel-head layers-head"><h2>CAD图层显示</h2><button aria-label="固定"><svg><use href="#pin"/></svg></button><button aria-label="关闭"><svg><use href="#x"/></svg></button></header>
    <div class="layers">
      <div class="layer"><svg class="chev"><use href="#right"/></svg><label><input type="checkbox">已提取的CAD图层</label></div>
      <div class="layer"><svg class="chev"><use href="#right"/></svg><label><input type="checkbox">CAD原始图层</label></div>
    </div>
  </aside>

  <section class="work">
    <div class="toolrow"><div class="bar"><i class="grip"></i>
      <button class="tool"><svg class="ico"><use href="#erase"/></svg>删除</button><i class="sep"></i>
      <button class="tool"><svg class="ico"><use href="#copy"/></svg>复制</button>
      <button class="tool"><svg class="ico"><use href="#mirror"/></svg>镜像</button><i class="sep"></i>
      <button class="tool"><svg class="ico"><use href="#move"/></svg>移动</button>
      <button class="tool"><svg class="ico"><use href="#rotate"/></svg>旋转</button><i class="sep"></i>
      <button class="tool"><svg class="ico"><use href="#extend"/></svg>延伸</button>
      <button class="tool"><svg class="ico"><use href="#trim"/></svg>修剪</button><i class="sep"></i>
      <button class="tool"><svg class="ico"><use href="#break"/></svg>打断</button>
      <button class="tool"><svg class="ico"><use href="#merge"/></svg>合并</button>
      <button class="tool off"><svg class="ico"><use href="#split"/></svg>分割</button><i class="sep"></i>
      <button class="tool drop tight"><svg class="ico"><use href="#align"/></svg>对齐</button>
      <button class="tool"><svg class="ico"><use href="#offset"/></svg>偏移</button>
      <button class="tool"><svg class="ico"><use href="#stretch"/></svg>拉伸</button><i class="sep"></i>
      <button class="tool off"><svg class="ico"><use href="#grip-pt"/></svg>设置夹点</button>
    </div></div>
    <div class="toolrow"><div class="bar"><i class="grip"></i>
      <span class="combo short"><select aria-label="楼层"><option>首层</option></select></span>
      <span class="combo"><select aria-label="构件大类"><option>梁</option></select></span>
      <span class="combo"><select aria-label="构件类型"><option>圈梁</option></select></span>
      <span class="combo"><select aria-label="构件"><option>QL-1</option></select></span>
      <span class="combo"><select aria-label="分层"><option>分层1</option></select></span><i class="sep"></i>
      <button class="tool"><svg class="ico"><use href="#props"/></svg>属性</button>
      <button class="tool"><svg class="ico"><use href="#editbar"/></svg>编辑钢筋</button>
      <button class="tool"><svg class="ico"><use href="#list"/></svg>构件列表</button>
      <button class="tool"><svg class="ico"><use href="#picker"/></svg>拾取构件</button>
    </div><div class="bar"><i class="grip"></i>
      <button class="tool"><svg class="ico"><use href="#twopt"/></svg>两点</button>
      <button class="tool"><svg class="ico"><use href="#parallel"/></svg>平行</button>
      <button class="tool drop"><svg class="ico"><use href="#ptangle"/></svg>点角</button>
      <button class="tool drop"><svg class="ico"><use href="#threeaxis"/></svg>三点辅轴</button>
      <button class="tool"><svg class="ico"><use href="#erase"/></svg>删除辅轴</button>
      <button class="tool drop"><svg class="ico"><use href="#dim"/></svg>尺寸标注</button>
    </div></div>
    <div class="toolrow"><div class="bar"><i class="grip"></i>
      <button class="tool drop"><svg class="ico"><use href="#cursor"/></svg>选择</button><i class="sep"></i>
      <button class="tool on"><svg class="ico"><use href="#line"/></svg>直线</button>
      <button class="tool"><svg class="ico"><use href="#ptlen"/></svg>点加长度</button>
      <button class="tool drop"><svg class="ico"><use href="#arc"/></svg>三点画弧</button>
      <span class="combo short"><select aria-label="画法"><option></option></select></span>
      <button class="tool"><svg class="ico"><use href="#rect"/></svg>矩形</button><i class="sep"></i>
      <button class="tool drop tight"><svg class="ico"><use href="#smart"/></svg>智能布置</button><i class="sep"></i>
      <button class="tool"><svg class="ico"><use href="#segprop"/></svg>修改圈梁段属性</button>
      <button class="tool"><svg class="ico"><use href="#elev"/></svg>查改标高</button>
      <button class="tool"><svg class="ico"><use href="#autogen"/></svg>自动生成圈梁</button>
    </div><div class="bar empty"><i class="grip"></i></div></div>

    <div class="canvas">
      <svg viewBox="421 207 1499 756" preserveAspectRatio="xMinYMin slice" role="img" aria-label="圈梁平面图">
        <g fill="#f0f000" stroke="#8a8a20" stroke-width="1">
          <rect x="906" y="216" width="350" height="24"/><rect x="1256" y="200" width="24" height="354"/><rect x="1575" y="200" width="24" height="354"/>
          <rect x="1280" y="358" width="295" height="23"/><rect x="1312" y="554" width="247" height="57"/><rect x="1615" y="554" width="173" height="57"/>
          <rect x="1256" y="611" width="56" height="120"/><rect x="1788" y="611" width="56" height="120"/><rect x="906" y="731" width="350" height="56"/><rect x="1844" y="731" width="80" height="56"/>
        </g>
        <rect x="850" y="256" width="56" height="475" fill="#f00000"/>
        <rect x="1844" y="570" width="80" height="23" fill="#f07878"/>
        <g fill="#7800f0">
          <rect x="850" y="200" width="56" height="56"/><rect x="850" y="731" width="56" height="56"/>
          <rect x="1256" y="216" width="24" height="24"/><rect x="1575" y="216" width="24" height="24"/><rect x="1256" y="358" width="24" height="23"/><rect x="1575" y="358" width="24" height="23"/>
          <rect x="1256" y="554" width="56" height="57"/><rect x="1559" y="554" width="56" height="57"/><rect x="1788" y="554" width="56" height="57"/>
          <rect x="1256" y="731" width="56" height="56"/><rect x="1788" y="731" width="56" height="56"/>
        </g>
        <g stroke="#007800" fill="none">
          <path d="M421 228.500H878M421 369.500H878M421 582.500H878M421 759.500H878M524.500 207V963M702.500 207V963"/>
          <path d="M680 207L727 254M676 345L727 395M676 558L727 608M676 734L727 785" stroke="#005a00"/>
        </g>
        <path d="M878 228.500H1920M878 369.500H1920M878 582.500H1920M878 759.500H1920M878.500 207V963M1127.500 207V963M1268.500 207V963M1374.500 207V963M1587.500 207V963M1693.500 207V963M1799.500 207V963" stroke="#f00000" stroke-width="1.200" fill="none"/>
        <path d="M879 750v10h11M880 753h4v6" stroke="#f00000" stroke-width="2" fill="none"/>
        <defs><path id="ring" d="M0-16L8-14 14-8 16 0 14 8 8 14 0 16-8 14-14 8-16 0-14-8-8-14z"/></defs>
        <g stroke="#007000" fill="none">
          <use href="#ring" x="437.500" y="228.500"/><use href="#ring" x="437.500" y="369.500"/><use href="#ring" x="437.500" y="582.500"/><use href="#ring" x="437.500" y="759.500"/>
          <use href="#ring" x="1902.500" y="228.500"/><use href="#ring" x="1902.500" y="369.500"/><use href="#ring" x="1902.500" y="582.500"/><use href="#ring" x="1902.500" y="759.500"/>
          <use href="#ring" x="878.500" y="223"/><use href="#ring" x="1268.500" y="223"/><use href="#ring" x="1587.500" y="223"/><use href="#ring" x="1799.500" y="223"/>
          <use href="#ring" x="878.500" y="947"/><use href="#ring" x="1127.500" y="947"/><use href="#ring" x="1374.500" y="947"/><use href="#ring" x="1693.500" y="947"/>
        </g>
        <g class="axis-text">
          <text x="438" y="235">G</text><text x="438" y="376">F</text><text x="438" y="589">E</text><text x="438" y="766">D</text>
          <text x="1903" y="235">G</text><text x="1903" y="376">F</text><text x="1903" y="589" fill="#4a8a8a">E</text><text x="1903" y="766" fill="#6058a0">D</text>
          <text x="878" y="229" fill="#8fb060">1</text><text x="1268" y="229" fill="#8fb060">2</text><text x="1587" y="229" fill="#8fb060">4</text><text x="1800" y="229">6</text>
          <text x="878" y="954">1</text><text x="1127" y="954">2</text><text x="1374" y="954">3</text><text x="1693" y="954">5</text>
          <text transform="translate(649 297) rotate(-90)">1200</text><text transform="translate(649 474) rotate(-90)">1800</text><text transform="translate(649 669) rotate(-90)">1500</text><text transform="translate(649 900) rotate(-90)">2400</text><text transform="translate(472 811) rotate(-90)">13500</text>
        </g>
        <path d="M490 901V850" stroke="#00ff00" stroke-width="5"/><path d="M485 854L490 839L495 854z" fill="#00ff00"/>
        <path d="M490 901H540" stroke="#ff0000" stroke-width="5"/><path d="M536 895L552 901L536 907z" fill="#ff0000"/>
        <path d="M501 844l6 6 7-6M507 850v5" stroke="#00d000" fill="none"/><path d="M536 875l12 12M548 875l-12 12" stroke="#d00000" fill="none"/>
      </svg>
      <div class="speed">52</div>
    </div>

    <div class="toolrow bottom"><div class="bar"><i class="grip"></i>
      <button class="tool"><svg class="ico"><use href="#ortho"/></svg>正交</button>
      <button class="tool on"><svg class="ico"><use href="#snap"/></svg>对象捕捉</button>
      <button class="tool on"><svg class="ico"><use href="#dyn"/></svg>动态输入</button>
    </div><div class="bar"><i class="grip"></i>
      <button class="tool"><svg class="ico"><use href="#cross"/></svg>交点</button>
      <button class="tool on"><svg class="ico"><use href="#perp"/></svg>垂点</button>
      <button class="tool on"><svg class="ico"><use href="#mid"/></svg>中点</button>
      <button class="tool"><svg class="ico"><use href="#vertex"/></svg>顶点</button>
      <button class="tool"><svg class="ico"><use href="#coord"/></svg>坐标</button>
    </div><div class="bar offsets"><i class="grip"></i>
      <span class="combo short"><select aria-label="偏移方式"><option>不偏移</option></select></span><i class="sep"></i>
      <label for="dx">X=</label><span class="spin"><input id="dx" value="0" disabled></span><span>mm</span>
      <label for="dy">Y=</label><span class="spin"><input id="dy" value="0" disabled></span><span>mm</span><i class="sep"></i>
      <label class="turn"><input type="checkbox">旋转</label><span class="spin wide"><input value="0.000" aria-label="旋转角度" disabled></span><span>°</span>
    </div></div>
  </section>
</main>

<footer class="status">
  <span class="coords">X=-8 Y=7195</span><span class="height">层高:4.45m</span><span class="base">底标高:0m</span><span class="count">0</span><span class="hint">按鼠标左键指定下一个端点，按右键中止或ESC取消，或按Ctrl+左键回退</span><span class="fps">349.6 FPS</span>
</footer>

<div class="taskbar">
  <button class="start" aria-label="开始"><svg viewBox="0 0 20 20"><path d="M0 3l8-1v7.500H0zM9 2l11-2v9.500H9zM0 10.500h8V18l-8-1zM9 10.500h11V20L9 18z" fill="#fff"/></svg></button>
  <label class="search"><svg class="cortana" viewBox="0 0 28 28"><circle cx="14" cy="14" r="11.500" fill="none" stroke="#111" stroke-width="3"/></svg><input placeholder="在这里输入你要搜索的内容" aria-label="搜索"><svg class="mic" viewBox="0 0 16 22"><rect x="5" y="1" width="6" height="12" rx="3" fill="none" stroke="#222" stroke-width="1.500"/><path d="M2 9v2c0 7 12 7 12 0V9M8 16v5" fill="none" stroke="#222" stroke-width="1.500"/></svg></label>
  <button class="app taskview" aria-label="任务视图"><svg viewBox="0 0 20 20"><path d="M.5 0v3.500h12V0M.5 6.500h12v8H.5zM.5 20v-3h12v3M18.500 0v5M18.500 10v10" fill="none" stroke="#fff" stroke-width="1.200"/><path d="M17 6h3v3h-3z" fill="#fff"/></svg></button>
  <button class="app run" aria-label="文件资源管理器"><svg viewBox="0 0 30 30"><path d="M1 3h12l2 3h13v20H1z" fill="#fce28c"/><path d="M1 3h12l2 3H1z" fill="#f0b820"/><path d="M6 27V15h18v12h-5v-6h-8v6z" fill="#3fb2e4"/></svg></button>
  <button class="app run" aria-label="Edge"><svg viewBox="0 0 30 30"><path d="M3 14C4 5 10 2 16 2c8 0 12 6 11 14H10c0 7 9 9 16 5v6C14 32 4 27 6 17c1-4 4-7 7-8-2 2-3 3-3 5h10c0-9-12-7-17 0z" fill="#0a7bd8"/></svg></button>
  <button class="app" aria-label="应用商店"><svg viewBox="0 0 30 30"><path d="M10 10V5c0-6 10-6 10 0v5" fill="none" stroke="#ddd" stroke-width="1.800"/><path d="M0 8h30l-1 21H1z" fill="#fff"/><path d="M8 12h6v6H8z" fill="#f25022"/><path d="M15 12h6v6h-6z" fill="#7fba00"/><path d="M8 19h6v6H8z" fill="#00a4ef"/><path d="M15 19h6v6h-6z" fill="#ffb900"/></svg></button>
  <button class="app" aria-label="邮件"><svg viewBox="0 0 30 30"><path d="M0 10l15-8 15 8v16H0z" fill="#fff"/><path d="M1 10h28l-11 6 6 6-12-5z" fill="#111"/></svg></button>
  <button class="app" aria-label="云助手"><svg viewBox="0 0 30 30"><circle cx="15" cy="15" r="15" fill="#3f97e8"/><path d="M17 6l-7 6c-2 2-1 4 1 4h4M13 24l7-6c2-2 1-4-1-4h-4" fill="none" stroke="#fff" stroke-width="3.500"/></svg></button>
  <button class="app run" aria-label="CAD"><svg viewBox="0 0 30 30"><rect x="1" y="1" width="28" height="28" rx="4" fill="#1462b8" stroke="#a8b4c0" stroke-width="2"/><path d="M10 12H6v9h4M11 22l4-13 4 13M13 18h5M20 12v9h2c4 0 4-9 0-9z" fill="none" stroke="#dbe9f8" stroke-width="1.800"/></svg></button>
  <button class="app run" aria-label="Word"><svg viewBox="0 0 30 30"><rect x="14" y="4" width="15" height="22" fill="#fff" stroke="#2b579a"/><path d="M18 8h9M18 12h9M18 16h9M18 20h9" stroke="#2b579a" stroke-width="1.500"/><path d="M1 4l17-3v28L1 26z" fill="#2b579a"/><path d="M4 10l3 10 3-9 3 9 3-10" fill="none" stroke="#fff" stroke-width="2"/></svg></button>
  <button class="app active" aria-label="GGJ2013"><svg><use href="#logo"/></svg></button>
  <button class="app alert" aria-label="截图工具"><svg viewBox="0 0 30 30"><circle cx="15" cy="15" r="14" fill="#8b8f92"/><path d="M15 1v14H1A14 14 0 0 1 15 1z" fill="#3a3532"/><path d="M15 15v14A14 14 0 0 1 1 15z" fill="#2f64ae"/><path d="M15 15h14a14 14 0 0 1-14 14z" fill="#c9cfc8"/><path d="M7 5l6 8M18 4l7 8M19 17l5 8M6 17l5 8" stroke="#d8c9a8" stroke-width="2"/><path d="M15 1v28M1 15h28" stroke="#fff"/></svg></button>
  <div class="tray">
    <svg viewBox="0 0 20 20"><circle cx="13" cy="4" r="3"/><circle cx="6" cy="10" r="2.500"/><path d="M9 12c2-5 8-5 9 1M2 19c0-7 8-7 8 0"/></svg>
    <svg class="wide" viewBox="0 0 20 20"><path d="M3 13l7-7 7 7"/></svg>
    <svg viewBox="0 0 20 20"><circle cx="10" cy="10" r="9" fill="#e8d800" stroke="#2a8a20" stroke-width="2"/><path d="M10 5v10M5 10h10" stroke="#117a18" stroke-width="3.500"/></svg>
    <svg viewBox="0 0 20 20"><path d="M6 6h13v9H6z"/><path d="M8 8h9v5H8z" fill="#fff"/><path d="M1 5h5v4H1zM3 9v6h3M2 5V3M5 5V3"/></svg>
    <svg viewBox="0 0 20 20"><circle cx="10" cy="10" r="9" fill="#8b8f92" stroke="none"/><path d="M10 10v9a9 9 0 0 1-9-9z" fill="#2f64ae" stroke="none"/><path d="M10 1v18M1 10h18"/></svg>
    <svg viewBox="0 0 20 20"><path d="M2 18C2 9 9 3 18 2M6 18c0-6 5-11 12-12M10 18c0-4 3-7 8-8M14 18c0-2 2-4 4-4"/></svg>
    <svg viewBox="0 0 20 20"><path d="M1 7h3l4-4v14l-4-4H1zM11 7c2 2 2 4 0 6M14 5c3 3 3 7 0 10M16 3c5 4 5 10 0 14"/></svg>
    <span class="ime">英</span>
    <svg class="sogou" viewBox="0 0 20 20"><path d="M2 3l15-2 2 16-16 2z" fill="#f4511e" stroke="none"/><path d="M14 6c-5-2-8 0-6 3 2 1 6 1 5 4-2 2-5 2-7 0" stroke-width="2.500"/></svg>
  </div>
  <div class="clock"><span>11:27</span><span>2019/1/10</span></div>
  <button class="notes" aria-label="通知中心"><svg viewBox="0 0 30 30"><path d="M1 1h20v17H10l-4 5v-5H1z" fill="#fff"/><path d="M4 6h14M4 10h14M4 14h9" stroke="#111" stroke-width="1.500"/><circle cx="20" cy="20" r="9" fill="#333" stroke="#aaa"/></svg><b>1</b></button>
</div>

<dialog open class="dialog" aria-labelledby="dlg-title">
  <header><svg class="ico"><use href="#logo"/></svg><h2 id="dlg-title">提示信息</h2><button aria-label="关闭对话框"><svg><use href="#x"/></svg></button></header>
  <div class="message">
    <textarea readonly aria-label="提示内容">QL-1不能与基础层分层1的QL-1(ID为149)重叠布置</textarea>
    <div class="vscroll"><svg><use href="#up"/></svg><svg><use href="#down"/></svg></div>
    <div class="hscroll"><svg><use href="#left"/></svg><svg><use href="#right"/></svg></div>
  </div>
  <button class="ok">关闭</button>
</dialog>
</body>
</html>
```
FILE: styles.css
```css
* { box-sizing: border-box; }
body {
  margin: 0;
  height: 100vh;
  display: flex;
  flex-direction: column;
  overflow: hidden;
  background: #f0f0f0;
  color: #000;
  font: 15px/20px "Noto Sans CJK SC", "Liberation Sans", sans-serif;
}
.sprite { position: absolute; }
button, input, select, textarea { font: inherit; color: inherit; }
button { margin: 0; padding: 0; border: 0; background: none; white-space: nowrap; }
h1, h2 { margin: 0; font: inherit; white-space: nowrap; }
ul { margin: 0; padding: 0; list-style: none; }
svg { display: block; flex: none; }
.ico { width: 20px; height: 20px; }

/* window frame */
.titlebar { height: 29px; flex: none; display: flex; align-items: center; gap: 5px; padding-left: 2px; background: #fff; color: #888; }
.window-buttons { margin-left: auto; display: flex; padding-right: 4px; }
.window-buttons button { width: 58px; height: 28px; display: grid; place-items: center; }
.window-buttons svg { width: 12px; height: 12px; }

.menubar { height: 35px; flex: none; display: flex; align-items: center; padding: 0 0 2px 3px; }
.menu { padding: 0 7px 0 6px; }
.account { display: flex; padding: 0 3px 0 1px; }
.account .drop { padding-right: 8px; }
.beans { padding: 0 9px 0 4px; }
.spare { width: 30px; margin: 0 3px 0 auto; }

/* toolbars */
.toolrow { display: flex; gap: 4px; height: 32px; flex: none; }
.bar { display: flex; align-items: center; min-height: 32px; padding-bottom: 2px; background: linear-gradient(#fdfdfd, #f5f5f5); border-radius: 2px; }
.main-tools { gap: 3px; padding-left: 3px; height: 34px; margin-bottom: 4px; }
.main-tools .bar { height: 34px; }
.files { width: 186px; }
.calc { width: 880px; }
.view { flex: 1; }
.tool { display: flex; align-items: center; gap: 5px; height: 28px; padding: 0 5px 0 4px; flex: none; }
.icon-only { padding: 0 4px; gap: 4px; }
.off { color: #8e8e8e; }
.on { background: #deebf7; box-shadow: inset 0 0 0 2px #2b8ce0; }
.drop::after { content: ""; width: 15px; height: 5px; margin-right: -5px; background: #000; clip-path: polygon(3px 0, 12px 0, 8px 5px, 7px 5px); }
.icon-only.drop::after { margin-right: -4px; }
.drop.off::after { background: #888; }
.tight::after { margin-left: -5px; }
.sep { width: 7px; height: 22px; flex: none; background: linear-gradient(#c4c4c4, #c4c4c4) center / 1px 100% no-repeat; }
.grip { width: 8px; height: 20px; flex: none; background: radial-gradient(circle, #a0a0a0 1px, transparent 2px) center / 4px 5px repeat-y; }
.more { width: 16px; height: 18px; margin-left: auto; align-self: flex-start; }
.more svg, .overflow svg { width: 12px; height: 12px; }
.combo { position: relative; width: 86px; height: 30px; margin: 0 2px; flex: none; display: flex; align-items: center; background: #fff; }
.combo::after { content: ""; position: absolute; right: 0; top: 2px; bottom: 2px; width: 14px; pointer-events: none; background: #000; clip-path: polygon(3px 11px, 11px 11px, 7px 16px); }
.combo select { flex: 1; width: 100%; height: 100%; padding: 0 2px; border: 0; background: linear-gradient(#f5f5f5, #f5f5f5) right / 14px 100% no-repeat; appearance: none; outline: 0; }
.short { width: 71px; }
.with-icon { width: 76px; margin: 0 1px; padding-left: 3px; }
.empty { width: 40px; }

main { flex: 1; min-height: 0; display: flex; }

/* side panels */
.panel-head { height: 18px; flex: none; display: flex; align-items: center; border: 1px solid #a0a0a0; font-size: 16px; line-height: 16px; }
.panel-head h2 { flex: 1; margin-left: -1px; }
.panel-head button { width: 24px; height: 16px; display: grid; place-items: center; }
.panel-head svg { width: 12px; height: 12px; }
.nav { width: 206px; flex: none; display: flex; flex-direction: column; border-right: 1px solid #a0a0a0; }
.section { height: 28px; flex: none; border: 1px solid #a0a0a0; border-top-color: #c8c8c8; padding-bottom: 1px; }
.panel-head + .section { margin-top: 2px; }
.tree-tools { height: 33px; flex: none; display: flex; gap: 7px; align-items: center; padding-left: 8px; background: #f7f7f7; }
.tree-tools svg { width: 20px; height: 20px; }
.tree-box { flex: 1; min-height: 0; display: grid; grid-template: minmax(0, 1fr) 18px / minmax(0, 1fr) 19px; padding: 1px 3px 3px; border: 1px solid #828790; margin-bottom: 1px; background: #fff; }
.tree { overflow: hidden; white-space: nowrap; }
.folder { height: 20px; display: flex; align-items: center; padding-left: 8px; gap: 6px; }
.folder .ico { margin-left: 2px; }
.chev { width: 12px; height: 12px; color: #444; }
.closed .chev { color: #999; }
.tree ul { margin-left: 15px; padding-left: 23px; background: repeating-linear-gradient(#888 0 1px, transparent 1px 2px) left / 1px 100% no-repeat; }
.tree ul li { height: 20px; display: flex; align-items: center; gap: 6px; padding-left: 15px; background: repeating-linear-gradient(#888 0 1px, transparent 1px 2px) 0 0 / 1px 100% no-repeat, repeating-linear-gradient(90deg, #888 0 1px, transparent 1px 2px) 0 10px / 12px 1px no-repeat; }
.tree ul li:last-child { background-size: 1px 50%, 12px 1px; }
.tree ul .ico { width: 19px; height: 19px; }
.current span { display: flex; align-items: center; gap: 6px; height: 20px; margin-left: -3px; padding: 0 8px 0 3px; background: #d9d9d9; }
.vscroll, .hscroll { display: flex; align-items: center; background: #f0f0f0; color: #505050; }
.vscroll { flex-direction: column; padding: 4px 0; }
.hscroll { padding: 0 4px; }
.vscroll svg, .hscroll svg { width: 12px; height: 12px; }
.thumb { background: #cdcdcd; }
.tree-box .vscroll { grid-row: 1 / 3; grid-column: 2; justify-content: space-between; padding-bottom: 24px; }
.tree-box .vscroll .thumb { width: 19px; height: 69%; margin: 6px 0 auto; }
.tree-box .hscroll { justify-content: space-between; }
.tree-box .hscroll .thumb { width: 128px; height: 18px; margin: 0 auto 0 6px; }

.drawings { width: 206px; flex: none; margin: 0 3px 0 6px; display: flex; flex-direction: column; }
.tabs { display: flex; height: 27px; flex: none; padding-top: 2px; }
.tab { width: 56px; flex: none; overflow: hidden; padding: 0 0 3px 6px; text-align: left; border-top: 1px solid #d8d8d8; }
.selected { width: 108px; background: #fff; padding: 0 0 5px 9px; border-color: #fff; }
.arrow { width: 21px; height: 20px; flex: none; display: grid; place-items: center; border: 1px solid #c0c0c0; }
.arrow svg { width: 12px; height: 12px; }
.sheet { height: 383px; flex: none; display: flex; flex-direction: column; padding: 4px 5px 3px 6px; background: #f8f8f8; border: 1px solid #dcdcdc; }
.sheet-tools { height: 32px; flex: none; display: flex; align-items: flex-start; border-bottom: 1px solid #b0b0b0; background: #fff; }
.sheet-tools button { width: 72px; height: 29px; background: #f0f0f0; border: 1px solid #a8a8a8; }
.sheet-tools .overflow { width: 15px; margin-left: auto; padding-bottom: 10px; }
.sheet-grid { flex: 1; min-height: 0; display: flex; flex-direction: column; margin-top: 1px; padding: 0 2px 3px; background: #fff; border: 1px solid #a0a0a0; }
table { width: 100%; table-layout: fixed; border-collapse: collapse; line-height: 18px; }
th { height: 31px; padding: 0; font-weight: 400; color: #7a1a5c; background: linear-gradient(#fbdfa4, #f0c068); }
th.idx { width: 25px; background: #f4f4f4; }
td { height: 24px; padding: 0; border: 1px solid #d4d4d4; border-width: 0 0 1px 1px; overflow: hidden; }
td.idx { text-align: center; background: #f4f4f4; border-left: 0; }
.cell { display: flex; align-items: center; gap: 8px; height: 22px; padding-left: 3px; overflow: hidden; white-space: nowrap; }
.sub { padding-left: 37px; background: linear-gradient(#b8b8b8, #b8b8b8) 12px 0 / 1px 100% no-repeat, linear-gradient(#b8b8b8, #b8b8b8) 12px 11px / 20px 1px no-repeat; }
.last { background-size: 1px 50%, 20px 1px; }
.box { width: 15px; height: 15px; flex: none; border: 1px solid #a8a8a8; font-style: normal; line-height: 12px; text-align: center; }
.picked .idx { background: #fad08c; color: #7a1a5c; }
.picked td:last-child { background: #dbe81c; outline: 3px solid #808080; outline-offset: -2px; }
.sheet-grid .hscroll { margin-top: auto; height: 19px; }
.sheet-grid .thumb { width: 21px; height: 19px; margin: 0 auto 0 5px; }
.layers-head { margin-top: 10px; }
.layers { flex: 1; margin-top: 2px; padding-top: 1px; background: #fff; border: 1px solid #828790; }
.layer { height: 18px; display: flex; align-items: center; padding-left: 11px; gap: 9px; white-space: nowrap; }
.layer .chev { color: #888; }
.layer label { display: flex; align-items: center; gap: 3px; }
input[type="checkbox"] { appearance: none; width: 16px; height: 14px; margin: 0; border: 1px solid #555; background: #fff; flex: none; }

/* drawing area */
.work { flex: 1; min-width: 0; display: flex; flex-direction: column; gap: 3px; }
.work .toolrow { padding-left: 2px; }
.canvas { position: relative; flex: 1; min-height: 0; overflow: hidden; background: #000; margin-right: 1px; }
.canvas > svg { width: 100%; height: 100%; }
.axis-text { font-size: 19px; font-weight: 700; fill: #b4b4b4; text-anchor: middle; }
.speed { position: absolute; right: -34px; top: 227px; width: 56px; height: 56px; padding-left: 5px; border: 2px solid #fff; border-radius: 50%; background: linear-gradient(#8fe08f, #3cc455 40%, #4fd068); color: #fff; font: bold 13px/50px "DejaVu Sans", sans-serif; }
.bottom { height: 34px; margin-bottom: 2px; }
.bottom .bar { height: 34px; padding-bottom: 1px; }
.offsets { color: #808080; }
.offsets .combo { color: #000; }
.offsets label { padding-right: 6px; }
.offsets label + .spin + span { padding: 0 4px 0 3px; }
.spin { position: relative; width: 72px; height: 28px; flex: none; }
.wide.spin { width: 84px; }
.spin input { width: 100%; height: 100%; padding: 0 22px 0 4px; border: 1px solid #7a7a7a; background: #f7f7f7; color: #808080; text-align: right; }
.spin::after { content: ""; position: absolute; right: 4px; top: 4px; bottom: 4px; width: 10px; background: #666; clip-path: polygon(5px 0, 9px 5px, 1px 5px, 5px 0, 5px 20px, 9px 15px, 1px 15px, 5px 20px); }
.turn { display: flex; align-items: center; gap: 10px; color: #000; }
.turn input { width: 13px; border-color: #999; }

/* status line */
.status { height: 28px; flex: none; display: flex; gap: 3px; padding: 2px 0 1px; background: #fafafa; }
.status span { border: 1px solid #d6d6d6; border-left: 0; background: #f4f4f4; padding-left: 2px; line-height: 23px; white-space: nowrap; overflow: hidden; }
.coords { width: 185px; }
.height { width: 97px; }
.base { width: 122px; }
.count { width: 60px; }
.hint { flex: 1; }
.fps { width: 87px; }

/* taskbar */
.taskbar { height: 50px; flex: none; display: flex; background: linear-gradient(90deg, #15120e, #201811 45%, #0c0f10 60%, #0b0e10); color: #fff; }
.start { width: 60px; display: grid; place-items: center; }
.start svg { width: 20px; height: 20px; }
.search { width: 430px; display: flex; align-items: center; padding: 0 17px 0 11px; gap: 11px; background: #f2f2f2; color: #333; }
.cortana { width: 28px; height: 28px; }
.search input { flex: 1; min-width: 0; border: 0; background: none; outline: 0; font-size: 19px; padding: 0; }
.search input::placeholder { color: #333; opacity: 1; }
.mic { width: 16px; height: 22px; }
.app { width: 62px; display: grid; place-items: center; border: 0 solid #76b9ed; }
.app svg { width: 30px; height: 30px; }
.taskview { width: 58px; margin-right: 5px; }
.taskview svg { width: 20px; height: 20px; }
.run { width: 52px; margin: 0 5px; padding-top: 3px; border-bottom-width: 3px; }
.active { background: #454545; border-bottom-width: 3px; padding-top: 3px; }
.alert { background: #a35a20; border-bottom: 3px solid #ff7a10; padding-top: 3px; }
.tray { margin-left: auto; display: flex; align-items: center; gap: 10px; }
.tray svg { width: 20px; height: 20px; fill: none; stroke: #fff; stroke-width: 1; }
.tray .wide { margin-left: 15px; }
.ime { width: 20px; font-size: 18px; }
.tray .sogou { margin-left: 5px; }
.clock { width: 110px; margin-left: 5px; display: flex; flex-direction: column; align-items: center; padding-top: 3px; font-size: 16px; line-height: 22px; }
.notes { position: relative; width: 58px; padding-left: 6px; }
.notes svg { width: 30px; height: 30px; }
.notes b { position: absolute; left: 22px; top: 20px; font-weight: 400; }

/* message box */
.dialog { position: absolute; left: 50%; top: 346px; transform: translateX(-50%); margin: 0; width: 482px; height: 380px; padding: 0; border: 1px solid #d8d8d8; display: flex; flex-direction: column; background: #f0f0f0; box-shadow: 0 4px 14px rgba(0, 0, 0, .45); }
.dialog header { height: 38px; flex: none; display: flex; align-items: center; gap: 5px; padding: 0 14px 1px 11px; background: #fff; }
.dialog header button { margin-left: auto; }
.dialog header button svg { width: 14px; height: 14px; }
.message { flex: 1; min-height: 0; margin: 7px 8px 0; display: grid; grid-template: minmax(0, 1fr) 20px / minmax(0, 1fr) 20px; padding: 2px; border: 1px solid #2b8ce0; background: #fff; }
.message textarea { border: 0; outline: 0; resize: none; padding: 0 1px; overflow: hidden; white-space: nowrap; line-height: 18px; }
.message .vscroll { justify-content: space-between; color: #bdbdbd; grid-column: 2; padding: 5px 0; }
.message .hscroll { justify-content: space-between; color: #bdbdbd; grid-column: 1 / 3; padding: 0 26px 0 4px; }
.ok { width: 92px; height: 30px; flex: none; align-self: flex-end; margin: 15px 8px 12px; background: #e1e1e1; border: 2px solid #0078d7; }
```
